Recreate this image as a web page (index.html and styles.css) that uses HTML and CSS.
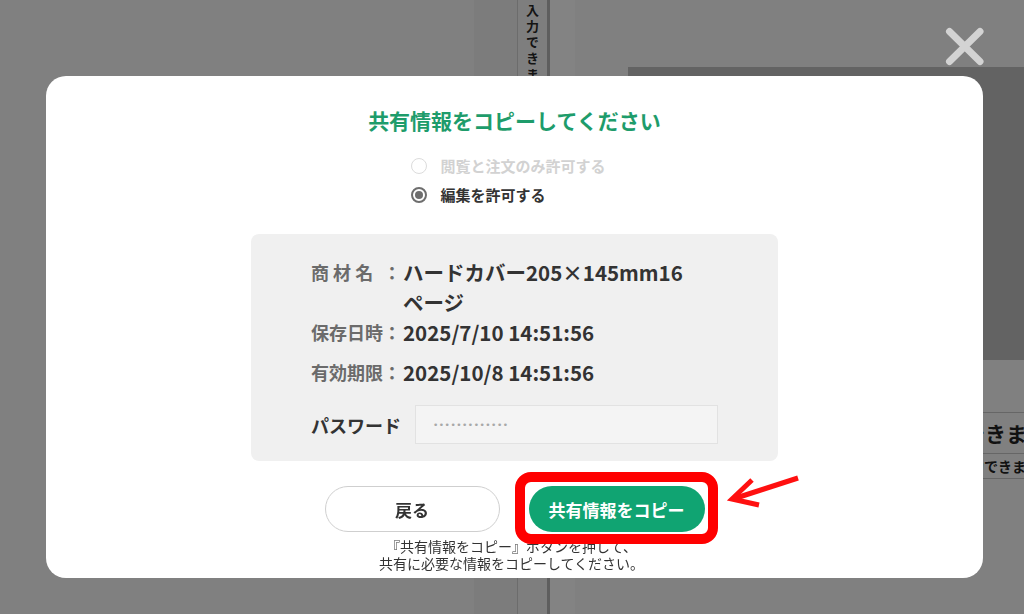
FILE: index.html
```html
<!DOCTYPE html>
<html lang="ja">
<head>
    <meta charset="UTF-8">
    <meta name="viewport" content="width=device-width, initial-scale=1.0">
    <title>共有情報をコピー</title>
    <link rel="stylesheet" href="styles.css">
</head>
<body>
    <!-- page behind the dialog (already dimmed) -->
    <div class="page">
        <div class="page-left"></div>
        <div class="page-strip">
            <div class="strip-shade"></div>
            <div class="strip-tab">入力できます</div>
            <div class="strip-edge"></div>
        </div>
        <div class="page-right">
            <div class="preview"></div>
            <div class="note-big">入力できます</div>
            <div class="note-small">入力できます</div>
        </div>
    </div>

    <button class="close-btn" aria-label="閉じる">
        <svg width="40" height="40" viewBox="0 0 40 40">
            <path d="M4.5 4.5 L35 34.5 M35 4.5 L4.5 34.5" stroke="#d3d3d3" stroke-width="7" stroke-linecap="round" fill="none"/>
        </svg>
    </button>

    <div class="overlay">
        <div class="modal">
            <h2 class="modal-title">共有情報をコピーしてください</h2>

            <div class="share-options">
                <label class="option is-disabled">
                    <span class="radio"></span>
                    閲覧と注文のみ許可する
                </label>
                <label class="option is-checked">
                    <span class="radio"></span>
                    編集を許可する
                </label>
            </div>

            <div class="info-box">
                <div class="info-row">
                    <span class="info-label">商 材 名</span>
                    <span class="info-colon">：</span>
                    <span class="info-value">ハードカバー205×145mm16<br>ページ</span>
                </div>
                <div class="info-row">
                    <span class="info-label">保存日時</span>
                    <span class="info-colon">：</span>
                    <span class="info-value">2025/7/10 14:51:56</span>
                </div>
                <div class="info-row info-row-last">
                    <span class="info-label">有効期限</span>
                    <span class="info-colon">：</span>
                    <span class="info-value">2025/10/8 14:51:56</span>
                </div>
                <div class="pass-row">
                    <span class="pass-label">パスワード</span>
                    <input class="pass-input" type="text" value="•••••••••••••" readonly>
                </div>
            </div>

            <div class="actions">
                <button class="btn btn-back">戻る</button>
                <div class="copy-wrap">
                    <button class="btn btn-copy">共有情報をコピー</button>
                    <span class="highlight"></span>
                    <svg class="arrow" width="90" height="45" viewBox="0 0 90 45">
                        <path d="M77 8 L12 29" stroke="#ff1010" stroke-width="5" fill="none"/>
                        <path d="M31 10 L11 29 L38 35" stroke="#ff1010" stroke-width="5" fill="none" stroke-linejoin="miter"/>
                    </svg>
                </div>
            </div>

            <p class="modal-note">『共有情報をコピー』ボタンを押して、<br>共有に必要な情報をコピーしてください。</p>
        </div>
    </div>
</body>
</html>
```

FILE: styles.css
```css
body {
    margin: 0;
    font-family: "Noto Sans CJK JP", "Noto Sans", sans-serif;
    background-color: #808080;
    overflow: hidden;
}

/* dimmed page */
.page {
    display: flex;
    height: 614px;
    overflow: hidden;
}
.page-left {
    width: 474px;
    flex-shrink: 0;
}
.page-strip {
    display: flex;
    width: 101px;
    flex-shrink: 0;
}
.strip-shade {
    width: 43px;
    background-color: #7c7c7c;
}
.strip-tab {
    width: 29px;
    background-color: #7e7e7e;
    border-left: 1px solid #6c6c6c;
    border-right: 3px solid #5e5e5e;
    writing-mode: vertical-rl;
    font-size: 13px;
    font-weight: 700;
    letter-spacing: 3px;
    line-height: 29px;
    padding-top: 4px;
    color: #141414;
}
.strip-edge {
    flex: 1;
    background-color: #838383;
}
.page-right {
    flex: 1;
    min-width: 0;
}
.preview {
    margin: 67px 0 0 53px;
    height: 293px;
    background-color: #636363;
}
.note-big,
.note-small {
    white-space: nowrap;
    font-weight: 700;
    color: #111;
    border-top: 1px solid #666;
}
.note-big {
    margin-top: 52px;
    height: 40px;
    line-height: 40px;
    font-size: 21px;
    padding-left: 347px;
}
.note-small {
    height: 24px;
    line-height: 24px;
    font-size: 14px;
    padding-left: 381px;
    border-bottom: 1px solid #666;
}

.close-btn {
    position: fixed;
    left: 945px;
    top: 27px;
    width: 40px;
    height: 40px;
    padding: 0;
    border: none;
    background: none;
}
.close-btn svg {
    display: block;
}

/* dialog */
.overlay {
    position: fixed;
    top: 0;
    left: 0;
    right: 0;
    bottom: 0;
    padding: 76px 0 0 46px;
}
.modal {
    width: 937px;
    height: 502px;
    box-sizing: border-box;
    background: #fff;
    border-radius: 20px;
    padding-top: 29px;
    display: flex;
    flex-direction: column;
    align-items: center;
}
.modal-title {
    margin: 0;
    font-size: 21px;
    line-height: 30px;
    font-weight: 700;
    color: #1e9c6b;
}

.share-options {
    margin: 16px 12px 0 0;
}
.option {
    display: flex;
    align-items: center;
    gap: 13px;
    height: 29px;
    font-size: 15px;
    font-weight: 700;
    color: #333;
}
.option.is-disabled {
    color: #d2d2d2;
}
.radio {
    width: 16px;
    height: 16px;
    box-sizing: border-box;
    border-radius: 50%;
    border: 1.5px solid #dcdcdc;
    display: flex;
    align-items: center;
    justify-content: center;
}
.option.is-checked .radio {
    border: 2px solid #6e6e6e;
}
.option.is-checked .radio::after {
    content: "";
    width: 8px;
    height: 8px;
    border-radius: 50%;
    background: #6e6e6e;
}

.info-box {
    margin-top: 25px;
    width: 527px;
    box-sizing: border-box;
    padding: 23px 60px 17px;
    background-color: #f0f0f0;
    border-radius: 8px;
}
.info-row {
    display: flex;
    line-height: 30px;
}
.info-row-last {
    margin-top: 10px;
}
.info-label {
    width: 72px;
    flex-shrink: 0;
    font-size: 18px;
    font-weight: 700;
    color: #6b6b6b;
    white-space: pre;
}
.info-colon {
    width: 20px;
    flex-shrink: 0;
    font-size: 18px;
    font-weight: 700;
    color: #6b6b6b;
}
.info-value {
    font-size: 20.5px;
    font-weight: 700;
    color: #333;
}
.pass-row {
    display: flex;
    align-items: center;
    margin-top: 18px;
}
.pass-label {
    width: 104px;
    flex-shrink: 0;
    font-size: 18px;
    font-weight: 700;
    color: #333;
}
.pass-input {
    flex: 1;
    min-width: 0;
    height: 39px;
    box-sizing: border-box;
    border: 1px solid #e2e2e2;
    background-color: #f4f4f4;
    padding: 0 0 0 17px;
    font-family: "DejaVu Sans", sans-serif;
    font-size: 9px;
    letter-spacing: 0.5px;
    color: #a8a8a8;
    outline: none;
}

.actions {
    display: flex;
    gap: 29px;
    margin-top: 25px;
}
.btn {
    height: 46px;
    border-radius: 23px;
    font-family: inherit;
    font-size: 17px;
    font-weight: 700;
    cursor: pointer;
}
.btn-back {
    width: 175px;
    background: #fff;
    border: 1.5px solid #cfcfcf;
    color: #333;
}
.btn-copy {
    width: 176px;
    background: #10a472;
    border: none;
    color: #fff;
}
.copy-wrap {
    position: relative;
}
.highlight {
    position: absolute;
    top: -14px;
    left: -14px;
    right: -13px;
    bottom: -12px;
    border: 10px solid #ff0000;
    border-radius: 16px;
}
.arrow {
    position: absolute;
    left: 192px;
    top: -16px;
}

.modal-note {
    margin: 6px 6px 0 0;
    font-size: 14px;
    line-height: 17px;
    color: #333;
    text-align: center;
}
```
